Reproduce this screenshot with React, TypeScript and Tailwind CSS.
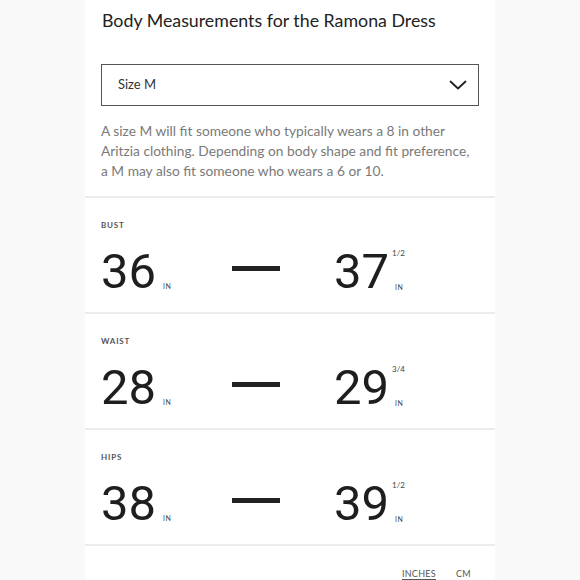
import React from 'react';

const rows = [
  { label: 'BUST', from: '36', to: '37', frac: '1/2' },
  { label: 'WAIST', from: '28', to: '29', frac: '3/4' },
  { label: 'HIPS', from: '38', to: '39', frac: '1/2' },
];

const sans = "font-['Lato','Noto_Sans',sans-serif]";
const nums = "font-['Roboto','Liberation_Sans',Arial,sans-serif]";

export default function App() {
  return (
    <div className="w-[580px] h-[580px] bg-[#f9f9f9] flex justify-center overflow-hidden">
      <div className="w-[410px] flex flex-col">
        {/* Header */}
        <div className="bg-white px-4 pt-2 pb-[15px]">
          <h1 className={`${sans} text-[17.8px] leading-6 text-[#222] pl-px`}>
            Body Measurements for the Ramona Dress
          </h1>
          <div className="mt-8 h-[42px] border-[1.5px] border-[#555] flex items-center justify-between pl-4 pr-[11px]">
            <span className={`${sans} text-[13px] text-[#333]`}>Size M</span>
            <svg width="18" height="10" viewBox="0 0 18 10" fill="none">
              <path d="M1.5 1.5 L9 8.5 L16.5 1.5" stroke="#222" strokeWidth="1.8" strokeLinecap="round" strokeLinejoin="round" />
            </svg>
          </div>
          <div className={`${sans} mt-[15px] text-[13.75px] leading-5 text-[#7a7a7a]`}>
            <div className="whitespace-nowrap">A size M will fit someone who typically wears a 8 in other</div>
            <div className="whitespace-nowrap">Aritzia clothing. Depending on body shape and fit preference,</div>
            <div className="whitespace-nowrap">a M may also fit someone who wears a 6 or 10.</div>
          </div>
        </div>

        {rows.map((r) => (
          <div key={r.label}>
            <div className="h-[2px] bg-[#ececec]" />
            <div className="bg-white px-4 pt-[23px] pb-4">
              <div className={`${sans} text-[8px] leading-[8px] font-bold tracking-[0.8px] text-[#555]`}>
                {r.label}
              </div>
              <div className="mt-[18px] h-[49px] flex items-start">
                <div className="w-[131px] flex items-start">
                  <span className={`${nums} text-[49px] leading-[49px] text-[#1e1e1e]`}>{r.from}</span>
                  <span className={`${sans} ml-[7px] mt-[36px] text-[7px] leading-[7px] tracking-[0.5px] text-[#444]`}>IN</span>
                </div>
                <div className="mt-[19px] w-12 h-[5px] bg-[#222]" />
                <div className="ml-[54px] flex items-start">
                  <span className={`${nums} text-[49px] leading-[49px] text-[#1e1e1e]`}>{r.to}</span>
                  <div className="ml-[3px] flex flex-col items-start">
                    <span className={`${sans} mt-[2px] text-[8px] leading-[8px] text-[#444]`}>{r.frac}</span>
                    <span className={`${sans} ml-[3px] mt-[27px] text-[7px] leading-[7px] tracking-[0.5px] text-[#444]`}>IN</span>
                  </div>
                </div>
              </div>
            </div>
          </div>
        ))}

        <div className="h-[2px] bg-[#ececec]" />
        <div className="bg-white flex-1 flex justify-end items-start pr-[24px] pt-[22px] gap-[20px]">
          <span className={`${sans} text-[9px] leading-3 tracking-[0.3px] text-[#555] underline underline-offset-2`}>INCHES</span>
          <span className={`${sans} text-[9px] leading-3 tracking-[0.3px] text-[#555]`}>CM</span>
        </div>
      </div>
    </div>
  );
}
